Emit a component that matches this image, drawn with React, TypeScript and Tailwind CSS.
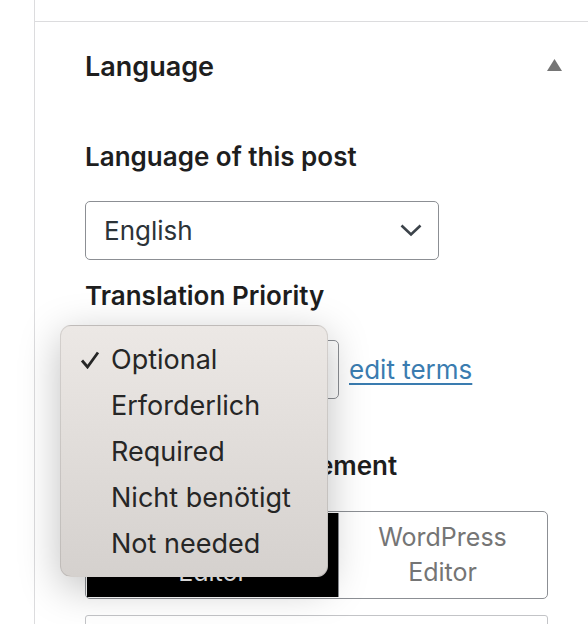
import React from 'react';

const FONT = "font-['Inter','Noto_Sans',sans-serif]";

const menuItems = ['Optional', 'Erforderlich', 'Required', 'Nicht benötigt', 'Not needed'];

export default function App() {
  return (
    <div className={`relative w-[588px] h-[624px] overflow-hidden bg-white flex ${FONT} text-[#1e1e1e]`}>
      <div className="w-[34px] shrink-0" />
      <div className="flex-1 border-l border-[#dcdcde]">
        <div className="h-[22px] border-b border-[#dcdcde]" />
        <div className="pl-[50px] pr-[26px]">
          {/* panel header */}
          <div className="mt-[29px] flex items-start justify-between">
            <h2 className="text-[27px] leading-[32px] font-semibold">Language</h2>
            <svg width="15" height="12" viewBox="0 0 15 12" className="mt-[8px]">
              <polygon points="7.5,0 15,12 0,12" fill="#757575" />
            </svg>
          </div>

          <div className="text-[26px] font-semibold mt-[58px] leading-[32px]">Language of this post</div>
          <div className="mt-[28px] w-[354px] h-[59px] border border-[#8c8f94] rounded-[5px] flex items-center justify-between pl-[18px] pr-[16px]">
            <span className="text-[26px] leading-[32px] text-[#2c3338]">English</span>
            <svg width="22" height="13" viewBox="0 0 22 13">
              <polyline points="1.5,1.5 11,10.5 20.5,1.5" fill="none" stroke="#3c434a" strokeWidth="2.6" />
            </svg>
          </div>

          <div className="text-[26px] font-semibold mt-[20px] leading-[32px]">Translation Priority</div>
          <div className="mt-[28px] flex items-center">
            <div className="w-[254px] h-[59px] border border-[#8c8f94] rounded-[5px] flex items-center pl-[18px]">
              <span className="text-[26px] text-[#2c3338]">Optional</span>
            </div>
            <a className="ml-[10px] text-[26px] leading-[32px] text-[#3a7cb0] underline underline-offset-[4px] decoration-[2px]">edit terms</a>
          </div>

          <div className="text-[26px] font-semibold mt-[51px] leading-[32px]">Translation Management</div>
          <div className="mt-[29px] w-[463px] h-[88px] flex border border-[#8c8f94] rounded-[5px] p-[1px]">
            <div className="w-[251px] bg-black text-white text-[25px] leading-[35px] flex flex-col items-center justify-center">
              <span>Translation</span>
              <span>Editor</span>
            </div>
            <div className="flex-1 text-[#757575] text-[25px] leading-[35px] flex flex-col items-center justify-center border-l border-[#8c8f94]">
              <span>WordPress</span>
              <span>Editor</span>
            </div>
          </div>
          <div className="mt-[16px] w-[463px] h-[40px] border border-[#c3c4c7] rounded-t-[3px]" />
        </div>
      </div>

      {/* native select popup */}
      <div className="absolute left-[60px] top-[325px] w-[268px] h-[252px] rounded-[11px] bg-gradient-to-b from-[#ece8e5] to-[#d5d1ce] border border-black/10 shadow-[0_10px_40px_rgba(0,0,0,0.25)] pt-[11px]">
        {menuItems.map((item, i) => (
          <div key={item} className="h-[46px] flex items-center text-[27px] text-[#262626]">
            <span className="w-[50px] flex justify-end pr-[11px]">
              {i === 0 && (
                <svg width="20" height="18" viewBox="0 0 20 18">
                  <polyline points="2,9.5 7.5,16 18,1.5" fill="none" stroke="#262626" strokeWidth="2.8" />
                </svg>
              )}
            </span>
            <span>{item}</span>
          </div>
        ))}
      </div>
    </div>
  );
}
